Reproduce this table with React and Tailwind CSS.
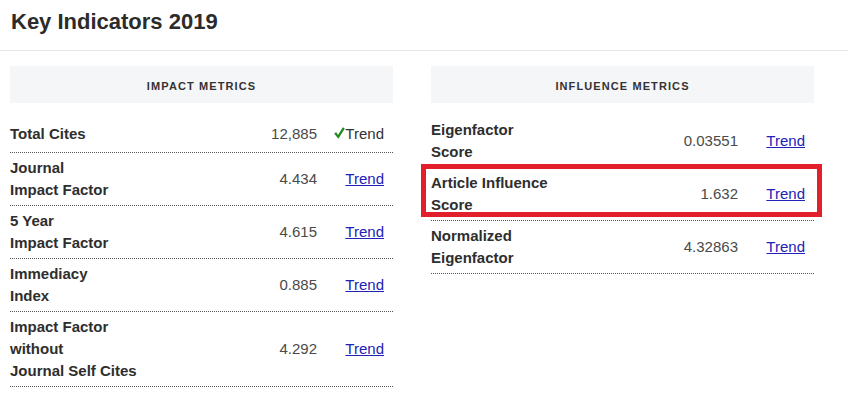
import React from "react";

function Check() {
  return (
    <svg width="11" height="12" viewBox="0 0 11 12" className="inline-block align-[0px]">
      <path d="M0.2 6.6 L2.2 5.2 L4 8 L8.8 0.2 L10.8 1.4 L4.3 11.8 Z" fill="#1f8a1f" />
    </svg>
  );
}

function Row({ label, value, checked, highlight, first }) {
  return (
    <div
      className={
        "relative flex items-center border-b border-dotted border-[#555] pt-1 pb-1 " +
        (first ? "min-h-[38px]" : "")
      }
    >
      <div className="flex-1 font-bold text-[15px] leading-[22px] text-[#2e2e2e]">
        {label.map((l, i) => (
          <div key={i}>{l}</div>
        ))}
      </div>
      <div className="mr-[9px] text-right text-[15px] leading-[22px] text-[#4a4a4a]">{value}</div>
      <div className="w-[67px] pr-[9px] text-right text-[15px] leading-[22px]">
        {checked ? (
          <span className="text-[#333]">
            <Check />
            Trend
          </span>
        ) : (
          <a href="#" className="text-[#2222b8] underline">Trend</a>
        )}
      </div>
      {highlight && (
        <div className="pointer-events-none absolute left-[-10px] right-[-8px] top-[-4px] bottom-[3px] border-[5px] border-[#e1202b]" />
      )}
    </div>
  );
}

function Panel({ title, rows }) {
  return (
    <div className="w-[383px]">
      <div className="bg-[#f5f6f8] pt-[14px] pb-[10px] text-center text-[11px] leading-[13px] font-bold tracking-[1.1px] text-[#333]">
        {title}
      </div>
      <div className="mt-[12px]">
        {rows.map((r, i) => (
          <Row key={i} {...r} />
        ))}
      </div>
    </div>
  );
}

export default function App() {
  const impact = [
    { label: ["Total Cites"], value: "12,885", checked: true, first: true },
    { label: ["Journal", "Impact Factor"], value: "4.434" },
    { label: ["5 Year", "Impact Factor"], value: "4.615" },
    { label: ["Immediacy", "Index"], value: "0.885" },
    { label: ["Impact Factor", "without", "Journal Self Cites"], value: "4.292" },
  ];
  const influence = [
    { label: ["Eigenfactor", "Score"], value: "0.03551" },
    { label: ["Article Influence", "Score"], value: "1.632", highlight: true },
    { label: ["Normalized", "Eigenfactor"], value: "4.32863" },
  ];
  return (
    <div className="w-[848px] h-[396px] overflow-hidden bg-white font-['Liberation_Sans',Arial,sans-serif]">
      <div className="border-b border-[#e6e6e6] pl-[11px] pt-[9px] pb-[15px]">
        <h1 className="text-[22px] leading-[26px] font-bold text-[#2b2b2b]">Key Indicators 2019</h1>
      </div>
      <div className="flex gap-[38px] pl-[10px] pt-[15px]">
        <Panel title="IMPACT METRICS" rows={impact} />
        <Panel title="INFLUENCE METRICS" rows={influence} />
      </div>
    </div>
  );
}
